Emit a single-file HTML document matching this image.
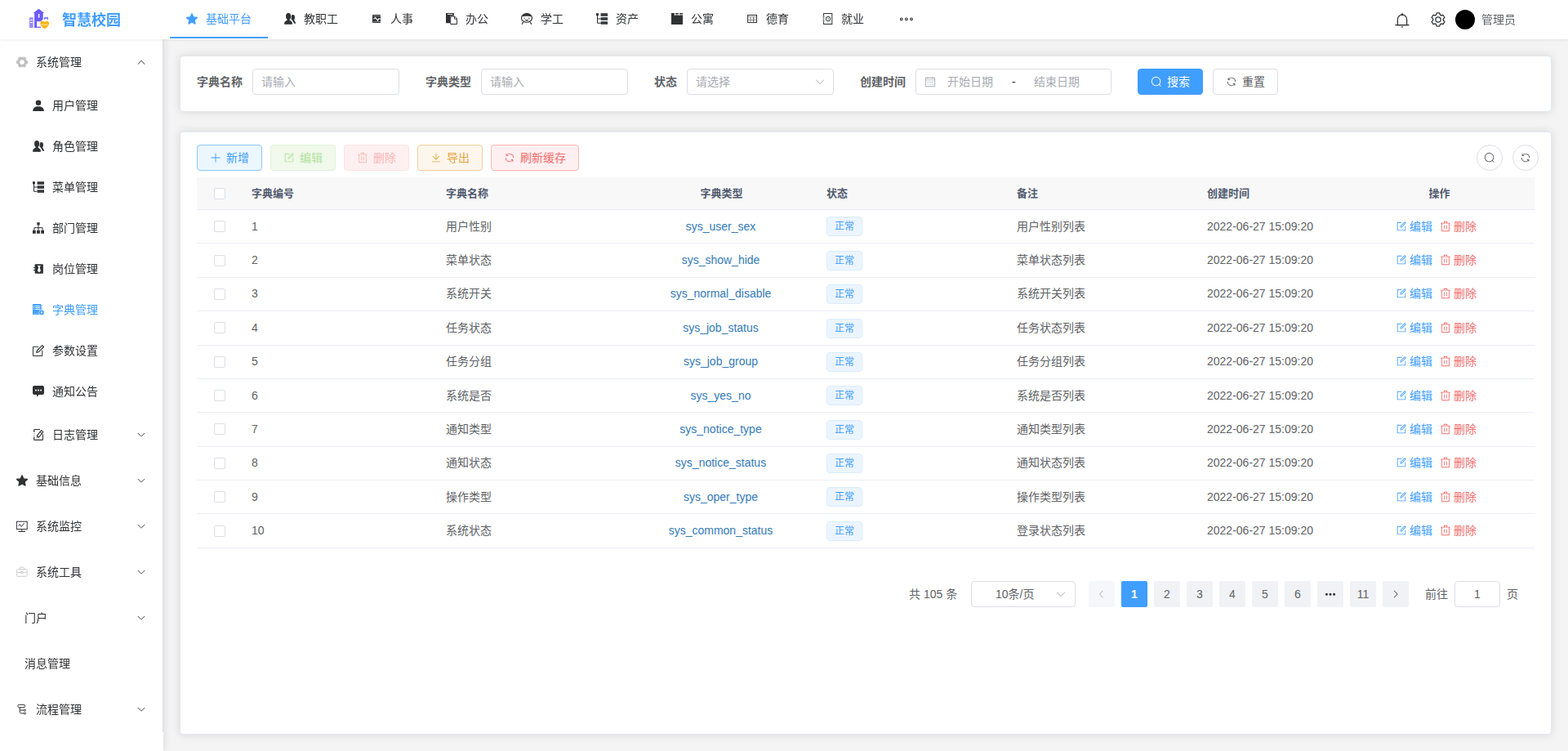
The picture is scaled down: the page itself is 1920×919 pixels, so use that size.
<!DOCTYPE html>
<html lang="zh-CN">
<head>
<meta charset="utf-8">
<title>智慧校园</title>
<style>
*{box-sizing:border-box;margin:0;padding:0}
html,body{width:1920px;height:919px;overflow:hidden}
body{font-family:"Liberation Sans","Noto Sans CJK SC",sans-serif;font-size:14px;color:#606266;background:#f4f4f5;position:relative}
svg{display:block}
i{font-style:normal}
#hdr{position:absolute;left:0;top:0;width:1920px;height:48px;background:#fff;box-shadow:0 1px 4px rgba(0,21,41,.08);z-index:5}
#logo{position:absolute;left:36px;top:11px;width:24px;height:24px;overflow:visible}
#logo-t{position:absolute;left:76px;top:1.5px;height:48px;line-height:47px;font-size:18px;font-weight:700;color:#409eff}
.tab{will-change:transform;position:absolute;top:0;height:47px;line-height:46px;font-size:14px;color:#303133;padding:0 20px 0 44px;white-space:nowrap}
.tab svg{position:absolute;left:20px;top:16px;width:14px;height:14px}
.tab.on{color:#409eff;border-bottom:2px solid #409eff}
#avatar{position:absolute;left:1782px;top:12px;width:24px;height:24px;border-radius:50%;background:#000}
#uname{position:absolute;left:1814px;top:0;height:48px;line-height:48px;font-size:14px;color:#606266}
#side{position:absolute;left:0;top:48px;width:200px;height:871px;background:#fff;box-shadow:2px 0 8px rgba(0,10,20,.09);z-index:4}
#side .bd{position:absolute;left:199px;top:0;width:1px;height:848px;background:#dcdfe6}
.mi{will-change:transform;position:absolute;left:0;width:199px;height:56px;line-height:56px;font-size:14px;color:#303133;white-space:nowrap}
.mi.sub{height:50px;line-height:50px}
.mi.on{color:#409eff}
.mi .ic{position:absolute;width:14px;height:14px}
.mi .ar{position:absolute;left:167px;top:50%;margin-top:-6px;width:12px;height:12px}
.mi span.t{position:absolute;top:0}
.card{position:absolute;background:#fff;border:1px solid #e4e7ed;border-radius:4px;box-shadow:0 0 12px rgba(0,0,0,.12)}
.lbl{position:absolute;top:84px;height:32px;line-height:32px;font-size:14px;font-weight:700;color:#606266;white-space:nowrap}
.inp{position:absolute;top:84px;height:32px;border:1px solid #dcdfe6;border-radius:4px;background:#fff;line-height:30px;padding-left:10px;color:#a8abb2;font-size:14px;white-space:nowrap}
.btn{position:absolute;height:32px;border-radius:4px;border:1px solid #dcdfe6;font-size:14px;line-height:30px;white-space:nowrap;background:#fff;color:#606266}
.btn svg{position:absolute;top:8px;width:14px;height:14px}
.btn span{position:absolute;top:0}
.cbtn{position:absolute;top:177px;width:32px;height:32px;border-radius:50%;border:1px solid #dcdfe6;background:#fff;color:#606266}
.cbtn svg{width:14px;height:14px;margin:8px}
#thead{position:absolute;left:241px;top:217px;width:1638px;height:40px;background:#f8f8f9;border-bottom:1px solid #ebeef5}
.th{position:absolute;top:217px;height:39px;line-height:39px;font-size:13px;font-weight:700;color:#515a6e;white-space:nowrap}
.row{position:absolute;left:241px;width:1638px;height:40px;font-size:14px;color:#606266}
.row div{position:absolute;top:0;height:40px;line-height:40px;white-space:nowrap}
.cb{position:absolute;width:14px;height:14px;border:1px solid #dcdfe6;border-radius:2px;background:#fff}
.row .c1{left:67px}.row .c2{left:305px}.row .c3{left:525px;width:233px;text-align:center;color:#337ab7}
.row .c5{left:1004px}.row .c6{left:1237px}
.tag{position:absolute;left:1012px;height:24px;width:44px;line-height:22px;border:1px solid #d9ecff;background:#ecf5ff;color:#409eff;font-size:12px;border-radius:4px;text-align:center}
.rb{position:absolute;left:241px;width:1638px;height:1px;background:#ebeef5}
.row .e{left:1485px;color:#409eff}.row .d{left:1539px;color:#f56c6c}
.row svg{position:absolute;width:14px;height:14px}
.pg{position:absolute;top:711px;width:32px;height:32px;line-height:32px;text-align:center;background:#f0f2f5;color:#606266;border-radius:2px;font-size:14px}
.pg.on{background:#409eff;color:#fff;font-weight:700}
.pt{position:absolute;top:711px;height:32px;line-height:32px;font-size:14px;color:#606266;white-space:nowrap}
</style>
</head>
<body>
<div id="hdr">
<svg id="logo" viewBox="0 0 24 24">
<rect x="0" y="10.300" width="4.700" height="12.700" fill="#9a8cff"/>
<rect x="1" y="13" width="2.900" height="1" fill="#fff"/><rect x="1" y="16" width="2.900" height="1" fill="#fff"/>
<path d="M11.500 -0.200 18.200 4.900H16.700V12.500L14 15.200H9V21.800H14V23H6.100V4.900H4.700z" fill="#6b5bff"/>
<rect x="10.850" y="5.900" width="1.500" height="4.800" rx=".5" fill="#fff"/>
<path d="M18.100 10.200H23V13.200H22.100V11.700H19V13H18.100z" fill="#6b5bff"/>
<path d="M18.700 24.300C16.500 22.600 13.300 20.400 13.300 17.700 13.300 16 14.600 14.800 16.100 14.800 17.200 14.800 18.200 15.400 18.700 16.300 19.200 15.400 20.200 14.800 21.300 14.800 22.800 14.800 24.100 16 24.100 17.700 24.100 20.400 20.900 22.600 18.700 24.300z" fill="#ffb20f"/>
<path d="M14 19.200h2.800l.8-1.200 1.100 2.300.9-1.400h3.800" fill="none" stroke="#fff" stroke-width=".6"/>
</svg>
<div id="logo-t">智慧校园</div>
<div class="tab on" style="left:208px"><svg viewBox="0 0 14 14" fill="currentColor"><polygon points="7.00,0.70 8.94,4.93 13.56,5.47 10.14,8.62 11.06,13.18 7.00,10.90 2.94,13.18 3.86,8.62 0.44,5.47 5.06,4.93" stroke="currentColor" stroke-width="1.2" stroke-linejoin="round"/></svg><span>基础平台</span></div>
<div class="tab" style="left:328px"><svg viewBox="0 0 14 14" fill="currentColor"><ellipse cx="10.700" cy="5.400" rx="2.250" ry="3.300"/><path d="M10.100 8 11.600 7.600 14 11.800V12.800H12.300L10 9z"/><g stroke="#fff" stroke-width=".9"><ellipse cx="5.100" cy="4.100" rx="3" ry="4.050"/><path d="M3.600 8.300C3.600 9.200 2.600 9.400 1.600 9.900.5 10.400.2 11.300.2 13.800H9.900C9.900 11.300 9.600 10.400 8.500 9.900 7.500 9.400 6.600 9.200 6.600 8.300z"/></g><ellipse cx="5.100" cy="4.100" rx="3" ry="4.050"/><path d="M3.600 7.500V8.300C3.600 9.200 2.600 9.400 1.600 9.900.5 10.400.2 11.300.2 13.800H9.900C9.900 11.300 9.600 10.400 8.500 9.900 7.500 9.400 6.600 9.200 6.600 8.300V7.500z"/></svg><span>教职工</span></div>
<div class="tab" style="left:434px"><svg viewBox="0 0 14 14" fill="currentColor"><rect x="2" y="2" width="10" height="10" rx=".7"/><rect x="2.900" y="3.100" width="9.100" height=".75" fill="#fff" opacity=".6"/><rect x="2.900" y="10.250" width="9.100" height=".75" fill="#fff" opacity=".6"/><rect x="2.900" y="6.600" width="9.100" height=".75" fill="#fff" opacity=".35"/><path d="M3.500 7.100 5.600 5.500 8.500 9.100 9.900 6.900H11.500" fill="none" stroke="#fff" stroke-width="1.100"/></svg><span>人事</span></div>
<div class="tab" style="left:526px"><svg viewBox="0 0 14 14" fill="currentColor"><path d="M0 0h9.800v3.600H5.200v8.600H0z"/><rect x="2" y="1.100" width="6.200" height=".9" fill="#fff"/><path d="M5.700 4.100h5.100l2.700 2.700v6.700H5.700z" fill="#fff" stroke="currentColor" stroke-width="1"/><path d="M10.500 4.300v2.800h2.800" fill="none" stroke="currentColor" stroke-width="1"/></svg><span>办公</span></div>
<div class="tab" style="left:618px"><svg viewBox="0 0 14 14" fill="currentColor"><ellipse cx="7" cy="5.900" rx="6.500" ry="5.400" fill="none" stroke="currentColor" stroke-width="1.100"/><path d="M.9 4.800C1.900 1.700 4.400.4 7 .4S12.100 1.700 13.100 4.800C10.600 3.500 3.400 3.500.9 4.800z"/><circle cx="4.200" cy="6.300" r=".7"/><circle cx="9.800" cy="6.300" r=".7"/><path d="M4.800 8.100C5.800 9.900 8.200 9.900 9.200 8.100 7.800 8.700 6.200 8.700 4.800 8.100z" stroke="currentColor" stroke-width=".5"/><path d="M2.600 11 1.300 13.800M11.400 11l1.300 2.800" fill="none" stroke="currentColor" stroke-width="1.200"/></svg><span>学工</span></div>
<div class="tab" style="left:710px"><svg viewBox="0 0 14 14" fill="currentColor"><rect x="5.600" y="0.200" width="8.400" height="3.600"/><rect x="5.600" y="5.200" width="8.400" height="3.600"/><rect x="5.600" y="10.300" width="8.400" height="3.500"/><rect x="0" y="0.200" width="3" height="3"/><path d="M1.500 3v9.300h4.100M1.500 7h4.100" fill="none" stroke="currentColor" stroke-width="1"/><rect x="6.800" y="1.700" width="6" height=".6" fill="#fff" opacity=".18"/><rect x="6.800" y="6.700" width="6" height=".6" fill="#fff" opacity=".18"/><rect x="6.800" y="11.800" width="6" height=".6" fill="#fff" opacity=".18"/></svg><span>资产</span></div>
<div class="tab" style="left:802px"><svg viewBox="0 0 14 14" fill="currentColor"><path d="M0 0h3.800v2.950H14V14H0z"/><rect x="5" y="0" width="3.900" height="1"/><rect x="10.100" y="0" width="3.900" height="1"/><rect x="5" y="1" width="3.900" height="1.950" opacity=".45"/><rect x="10.100" y="1" width="3.900" height="1.950" opacity=".45"/><rect x="3.800" y="2.450" width="10.200" height=".5" opacity=".45"/></svg><span>公寓</span></div>
<div class="tab" style="left:894px"><svg viewBox="0 0 14 14" fill="currentColor"><rect x="1.650" y="2.500" width="10.900" height="9.100" fill="none" stroke="currentColor" stroke-width="1"/><path d="M1.650 4.700h10.900" stroke="currentColor" stroke-width=".9" fill="none" opacity=".55"/><path d="M1.650 8.300h10.900M5.100 4.700v6.900" stroke="currentColor" stroke-width=".9" fill="none" opacity=".6"/><path d="M8.700 4.700v6.900" stroke="currentColor" stroke-width=".9" fill="none" opacity=".9"/></svg><span>德育</span></div>
<div class="tab" style="left:986px"><svg viewBox="0 0 14 14" fill="currentColor"><rect x="2.600" y=".5" width="10.200" height="13" fill="none" stroke="currentColor" stroke-width="1"/><path d="M1.200 4.500h2.600M1.200 7h2.600M1.200 9.500h2.600" stroke="#fff" stroke-width="1.600" fill="none"/><path d="M1.400 4.500h2.200M1.400 7h2.200M1.400 9.500h2.200" stroke="currentColor" stroke-width=".8" fill="none" opacity=".75"/><circle cx="8" cy="7.100" r="2.700" fill="none" stroke="currentColor" stroke-width="1"/><path d="M8 5.800v1.400h1" stroke="currentColor" stroke-width=".7" fill="none"/></svg><span>就业</span></div>
<div class="tab" style="left:1078px;width:60px"><svg style="left:24px;width:16px;height:14px;overflow:visible" viewBox="0 0 14 14" fill="currentColor"><circle cx=".8" cy="7.300" r="1.350" fill="none" stroke="currentColor" stroke-width="1.100"/><circle cx="6.900" cy="7.300" r="1.350" fill="none" stroke="currentColor" stroke-width="1.100"/><circle cx="13" cy="7.300" r="1.350" fill="none" stroke="currentColor" stroke-width="1.100"/></svg></div>
<svg style="position:absolute;left:1707px;top:15px;width:20px;height:20px;color:#303133" viewBox="0 0 1024 1024" fill="currentColor"><path d="M512 64a64 64 0 0 1 64 64v64H448v-64a64 64 0 0 1 64-64z"/><path d="M256 768h512V448a256 256 0 1 0-512 0v320zm256-640a320 320 0 0 1 320 320v384H192V448a320 320 0 0 1 320-320z"/><path d="M96 768h832q32 0 32 32t-32 32H96q-32 0-32-32t32-32zm352 128h128a64 64 0 0 1-128 0z"/></svg>
<svg style="position:absolute;left:1751px;top:14px;width:20px;height:20px;color:#303133" viewBox="0 0 1024 1024" fill="currentColor"><path d="M600.704 64a32 32 0 0 1 30.464 22.208l35.2 109.376c14.784 7.232 28.928 15.36 42.432 24.512l112.384-24.192a32 32 0 0 1 34.432 15.36L944.32 364.8a32 32 0 0 1-4.032 37.504l-77.12 85.12a357.12 357.12 0 0 1 0 49.024l77.12 85.248a32 32 0 0 1 4.032 37.504l-88.704 153.6a32 32 0 0 1-34.432 15.296L708.8 803.904c-13.44 9.088-27.648 17.28-42.368 24.512l-35.264 109.376A32 32 0 0 1 600.704 960H423.296a32 32 0 0 1-30.464-22.208L357.696 828.48a351.616 351.616 0 0 1-42.56-24.64l-112.32 24.256a32 32 0 0 1-34.432-15.36L79.68 659.2a32 32 0 0 1 4.032-37.504l77.12-85.248a357.12 357.12 0 0 1 0-48.896l-77.12-85.248A32 32 0 0 1 79.68 364.8l88.704-153.6a32 32 0 0 1 34.432-15.296l112.32 24.256c13.568-9.152 27.776-17.408 42.56-24.64l35.2-109.312A32 32 0 0 1 423.232 64H600.64zm-23.424 64H446.72l-36.352 113.088-24.512 11.968a294.113 294.113 0 0 0-34.816 20.096l-22.656 15.36-116.224-25.088-65.28 113.152 79.68 88.192-1.92 27.136a293.12 293.12 0 0 0 0 40.192l1.92 27.136-79.808 88.192 65.344 113.152 116.224-25.024 22.656 15.296a294.113 294.113 0 0 0 34.816 20.096l24.512 11.968L446.72 896h130.688l36.48-113.152 24.448-11.904a288.282 288.282 0 0 0 34.752-20.096l22.592-15.296 116.288 25.024 65.28-113.152-79.744-88.192 1.92-27.136a293.12 293.12 0 0 0 0-40.256l-1.92-27.136 79.808-88.128-65.344-113.152-116.288 24.96-22.592-15.232a287.616 287.616 0 0 0-34.752-20.096l-24.448-11.904L577.344 128zM512 320a192 192 0 1 1 0 384 192 192 0 0 1 0-384zm0 64a128 128 0 1 0 0 256 128 128 0 0 0 0-256z"/></svg>
<div id="avatar"></div><div id="uname">管理员</div>
</div>
<div id="side"><div class="bd"></div>
<div class="mi" style="top:0px"><svg class="ic" style="left:20px;top:21px;color:#bfbfbf;" viewBox="0 0 14 14" fill="currentColor"><path d="M12.09 5.20 L13.44 5.56 L13.44 8.44 L12.09 8.80 L11.11 10.51 L11.47 11.86 L8.97 13.30 L7.99 12.31 L6.01 12.31 L5.03 13.30 L2.53 11.86 L2.89 10.51 L1.91 8.80 L0.56 8.44 L0.56 5.56 L1.91 5.20 L2.89 3.49 L2.53 2.14 L5.03 0.70 L6.01 1.69 L7.99 1.69 L8.97 0.70 L11.47 2.14 L11.11 3.49Z" stroke="currentColor" stroke-width="1" stroke-linejoin="round"/><circle cx="7" cy="7" r="5.400"/><circle cx="7" cy="7" r="2.850" fill="#fff"/></svg><span class="t" style="left:44px">系统管理</span><svg class="ar" viewBox="0 0 1024 1024" fill="currentColor"><path d="m488.832 344.320-339.840 356.672a32 32 0 0 0 0 44.160l.384.384a29.440 29.440 0 0 0 42.688 0l320-335.872 319.872 335.872a29.440 29.440 0 0 0 42.688 0l.384-.384a32 32 0 0 0 0-44.160L535.168 344.320a32 32 0 0 0-46.336 0z"/></svg></div>
<div class="mi sub" style="top:56px"><svg class="ic" style="left:40px;top:18px;" viewBox="0 0 14 14" fill="currentColor"><circle cx="7" cy="3.700" r="3.300"/><path d="M0.200 14c0-3.800 2.600-5.800 6.800-5.800s6.800 2 6.800 5.800z"/></svg><span class="t" style="left:64px">用户管理</span></div>
<div class="mi sub" style="top:106px"><svg class="ic" style="left:40px;top:18px;" viewBox="0 0 14 14" fill="currentColor"><ellipse cx="10.700" cy="5.400" rx="2.250" ry="3.300"/><path d="M10.100 8 11.600 7.600 14 11.800V12.800H12.300L10 9z"/><g stroke="#fff" stroke-width=".9"><ellipse cx="5.100" cy="4.100" rx="3" ry="4.050"/><path d="M3.600 8.300C3.600 9.200 2.600 9.400 1.600 9.900.5 10.400.2 11.300.2 13.800H9.900C9.900 11.300 9.600 10.400 8.500 9.900 7.500 9.400 6.600 9.200 6.600 8.300z"/></g><ellipse cx="5.100" cy="4.100" rx="3" ry="4.050"/><path d="M3.600 7.500V8.300C3.600 9.200 2.600 9.400 1.600 9.900.5 10.400.2 11.300.2 13.800H9.900C9.900 11.300 9.600 10.400 8.500 9.900 7.500 9.400 6.600 9.200 6.600 8.300V7.500z"/></svg><span class="t" style="left:64px">角色管理</span></div>
<div class="mi sub" style="top:156px"><svg class="ic" style="left:40px;top:18px;" viewBox="0 0 14 14" fill="currentColor"><rect x="5.600" y="0.200" width="8.400" height="3.600"/><rect x="5.600" y="5.200" width="8.400" height="3.600"/><rect x="5.600" y="10.300" width="8.400" height="3.500"/><rect x="0" y="0.200" width="3" height="3"/><path d="M1.500 3v9.300h4.100M1.500 7h4.100" fill="none" stroke="currentColor" stroke-width="1"/><rect x="6.800" y="1.700" width="6" height=".6" fill="#fff" opacity=".18"/><rect x="6.800" y="6.700" width="6" height=".6" fill="#fff" opacity=".18"/><rect x="6.800" y="11.800" width="6" height=".6" fill="#fff" opacity=".18"/></svg><span class="t" style="left:64px">菜单管理</span></div>
<div class="mi sub" style="top:206px"><svg class="ic" style="left:40px;top:18px;" viewBox="0 0 14 14" fill="currentColor"><rect x="5.300" y=".2" width="3.400" height="3.300"/><rect x="0" y="9.700" width="3.800" height="4.100"/><rect x="5.100" y="9.700" width="3.800" height="4.100"/><rect x="10.200" y="9.700" width="3.800" height="4.100"/><path d="M7 3.500v6.200M1.900 9.700V6.700h10.200v3" fill="none" stroke="currentColor" stroke-width="1"/></svg><span class="t" style="left:64px">部门管理</span></div>
<div class="mi sub" style="top:256px"><svg class="ic" style="left:40px;top:18px;" viewBox="0 0 14 14" fill="currentColor"><rect x="2.600" y="1.150" width="10.300" height="11.600" rx="1.100"/><rect x="1" y="5" width="2.400" height=".95"/><rect x="1" y="8" width="2.400" height=".95"/><path d="M5.900 3.100H9.900L8.700 5 9.900 9.600 7.900 11.300 5.900 9.600 7.100 5z" fill="#fff"/></svg><span class="t" style="left:64px">岗位管理</span></div>
<div class="mi sub on" style="top:306px"><svg class="ic" style="left:40px;top:18px;" viewBox="0 0 14 14" fill="currentColor"><path d="M1 0h8.400c.6 0 1 .4 1 1v12H1c-.6 0-1-.4-1-1V1c0-.6.400-1 1-1z"/><rect x="10.400" y="1" width="1.400" height="6.500" opacity=".45"/><g fill="#fff"><rect x=".9" y="2" width="1.100" height=".95"/><rect x=".9" y="4.050" width="1.100" height=".95"/><rect x=".9" y="6.100" width="1.100" height=".95"/><rect x="3.050" y="2" width="6" height=".95"/><rect x="3.050" y="4.050" width="6" height=".95"/><rect x="3.050" y="6.100" width="6" height=".95"/><rect x="1" y="11.100" width="7" height=".5" opacity=".5"/><circle cx="10.950" cy="10.400" r="3.400"/></g><circle cx="10.950" cy="10.400" r="2.850"/><circle cx="10.950" cy="10.400" r="1.150" fill="#fff"/></svg><span class="t" style="left:64px">字典管理</span></div>
<div class="mi sub" style="top:356px"><svg class="ic" style="left:40px;top:18px;" viewBox="0 0 14 14" fill="currentColor"><path d="M7.300 2.300H.5v11.200h11.200V6.900" fill="none" stroke="currentColor" stroke-width="1"/><path d="M11.700.7l1.800 1.800-6.300 6.300-2.400.6.600-2.400z" fill="#fff" stroke="currentColor" stroke-width="1.150" stroke-linejoin="round"/></svg><span class="t" style="left:64px">参数设置</span></div>
<div class="mi sub" style="top:406px"><svg class="ic" style="left:40px;top:18px;" viewBox="0 0 14 14" fill="currentColor"><path d="M2 0h10a2 2 0 0 1 2 2v7a2 2 0 0 1-2 2H7.600L5 13.800V11H2a2 2 0 0 1-2-2V2a2 2 0 0 1 2-2z"/><rect x="3" y="4.700" width="1.800" height="1.700" fill="#fff"/><rect x="6.100" y="4.700" width="1.800" height="1.700" fill="#fff"/><rect x="9.200" y="4.700" width="1.800" height="1.700" fill="#fff"/></svg><span class="t" style="left:64px">通知公告</span></div>
<div class="mi" style="top:456px"><svg class="ic" style="left:40px;top:21px;" viewBox="0 0 14 14" fill="currentColor"><path d="M9 .5H2.600c-.6 0-1 .4-1 1v1.600M1.600 10.300v2.100c0 .6.400 1 1 1h8.900c.6 0 1-.4 1-1V6.200" fill="none" stroke="currentColor" stroke-width="1.100"/><path d="M1.100 3.100h1.500M1.100 10.300h1.500" stroke="currentColor" stroke-width="1.100" fill="none"/><path d="M1.200 5.500h1.600M1.200 8h1.600" stroke="currentColor" stroke-width=".9" fill="none" opacity=".35"/><rect x="1.300" y="5.500" width="1.400" height="2.500" opacity=".12"/><path d="M5.200 8.300l2.300 1.900-3.300 1.400z" opacity=".5"/><path d="M10.600 1.700l2.300 1.900-5.400 6.600-2.300-1.900z" fill="#fff" stroke="currentColor" stroke-width="1.100" stroke-linejoin="round"/><path d="M9.100 3.500l2.300 1.900" stroke="currentColor" stroke-width="1" fill="none"/></svg><span class="t" style="left:64px">日志管理</span><svg class="ar" viewBox="0 0 1024 1024" fill="currentColor"><path d="M831.872 340.864 512 652.672 192.128 340.864a30.592 30.592 0 0 0-42.752 0 29.120 29.120 0 0 0 0 41.600L489.664 714.240a32 32 0 0 0 44.672 0l340.288-331.712a29.120 29.120 0 0 0 0-41.728 30.592 30.592 0 0 0-42.752 0z"/></svg></div>
<div class="mi" style="top:512px"><svg class="ic" style="left:20px;top:21px;" viewBox="0 0 14 14" fill="currentColor"><polygon points="7.00,0.70 8.94,4.93 13.56,5.47 10.14,8.62 11.06,13.18 7.00,10.90 2.94,13.18 3.86,8.62 0.44,5.47 5.06,4.93" stroke="currentColor" stroke-width="1.2" stroke-linejoin="round"/></svg><span class="t" style="left:44px">基础信息</span><svg class="ar" viewBox="0 0 1024 1024" fill="currentColor"><path d="M831.872 340.864 512 652.672 192.128 340.864a30.592 30.592 0 0 0-42.752 0 29.120 29.120 0 0 0 0 41.600L489.664 714.240a32 32 0 0 0 44.672 0l340.288-331.712a29.120 29.120 0 0 0 0-41.728 30.592 30.592 0 0 0-42.752 0z"/></svg></div>
<div class="mi" style="top:568px"><svg class="ic" style="left:20px;top:21px;" viewBox="0 0 14 14" fill="currentColor"><rect x=".4" y="1.200" width="12.800" height="9.400" fill="none" stroke="currentColor" stroke-width="1"/><path d="M6.800 10.600v3M2.600 13.500h8.400" stroke="currentColor" stroke-width="1" fill="none"/><path d="M2.600 6.500l1.700-2.100 1.800 3.100 3.500-4.300" fill="none" stroke="currentColor" stroke-width=".9"/></svg><span class="t" style="left:44px">系统监控</span><svg class="ar" viewBox="0 0 1024 1024" fill="currentColor"><path d="M831.872 340.864 512 652.672 192.128 340.864a30.592 30.592 0 0 0-42.752 0 29.120 29.120 0 0 0 0 41.600L489.664 714.240a32 32 0 0 0 44.672 0l340.288-331.712a29.120 29.120 0 0 0 0-41.728 30.592 30.592 0 0 0-42.752 0z"/></svg></div>
<div class="mi" style="top:624px"><svg class="ic" style="left:20px;top:21px;color:#c8c8c8;" viewBox="0 0 14 14" fill="currentColor"><rect x=".6" y="3.700" width="12.600" height="8.600" rx=".8" fill="none" stroke="currentColor" stroke-width=".9"/><path d="M4.400 3.700V1.900c0-.4.300-.7.700-.7h3.600c.4 0 .7.300.7.700v1.800" fill="none" stroke="currentColor" stroke-width=".9"/><path d="M.6 7.600h5.300M7.900 7.600h5.300" stroke="currentColor" stroke-width=".8" fill="none"/><rect x="5.900" y="6.600" width="2" height="2" fill="none" stroke="currentColor" stroke-width=".8"/></svg><span class="t" style="left:44px">系统工具</span><svg class="ar" viewBox="0 0 1024 1024" fill="currentColor"><path d="M831.872 340.864 512 652.672 192.128 340.864a30.592 30.592 0 0 0-42.752 0 29.120 29.120 0 0 0 0 41.600L489.664 714.240a32 32 0 0 0 44.672 0l340.288-331.712a29.120 29.120 0 0 0 0-41.728 30.592 30.592 0 0 0-42.752 0z"/></svg></div>
<div class="mi" style="top:680px"><span class="t" style="left:30px">门户</span><svg class="ar" viewBox="0 0 1024 1024" fill="currentColor"><path d="M831.872 340.864 512 652.672 192.128 340.864a30.592 30.592 0 0 0-42.752 0 29.120 29.120 0 0 0 0 41.600L489.664 714.240a32 32 0 0 0 44.672 0l340.288-331.712a29.120 29.120 0 0 0 0-41.728 30.592 30.592 0 0 0-42.752 0z"/></svg></div>
<div class="mi" style="top:736px"><span class="t" style="left:30px">消息管理</span></div>
<div class="mi" style="top:792px"><svg class="ic" style="left:20px;top:21px;" viewBox="0 0 14 14" fill="currentColor"><rect x="1.900" y="1.300" width="8.600" height="3.400" rx="1.500" fill="none" stroke="currentColor" stroke-width="1"/><path d="M4.300 4.700v5.600c0 .9.700 1.600 1.600 1.600h3.300M4.300 6.600c0 .9.700 1.500 1.600 1.500h3.300" fill="none" stroke="currentColor" stroke-width="1"/><circle cx="10.400" cy="8.100" r="1.100" fill="#fff" stroke="currentColor" stroke-width=".9"/><circle cx="10.400" cy="11.900" r="1.100" fill="#fff" stroke="currentColor" stroke-width=".9"/></svg><span class="t" style="left:44px">流程管理</span><svg class="ar" viewBox="0 0 1024 1024" fill="currentColor"><path d="M831.872 340.864 512 652.672 192.128 340.864a30.592 30.592 0 0 0-42.752 0 29.120 29.120 0 0 0 0 41.600L489.664 714.240a32 32 0 0 0 44.672 0l340.288-331.712a29.120 29.120 0 0 0 0-41.728 30.592 30.592 0 0 0-42.752 0z"/></svg></div>
</div>
<div class="card" style="left:220px;top:68px;width:1680px;height:69px"></div>
<div class="lbl" style="left:241px">字典名称</div><div class="inp" style="left:309px;width:180px">请输入</div>
<div class="lbl" style="left:521px">字典类型</div><div class="inp" style="left:589px;width:180px">请输入</div>
<div class="lbl" style="left:801px">状态</div><div class="inp" style="left:841px;width:180px">请选择<svg style="position:absolute;left:155px;top:8px;width:14px;height:14px;color:#a8abb2" viewBox="0 0 1024 1024" fill="currentColor"><path d="M831.872 340.864 512 652.672 192.128 340.864a30.592 30.592 0 0 0-42.752 0 29.120 29.120 0 0 0 0 41.600L489.664 714.240a32 32 0 0 0 44.672 0l340.288-331.712a29.120 29.120 0 0 0 0-41.728 30.592 30.592 0 0 0-42.752 0z"/></svg></div>
<div class="lbl" style="left:1053px">创建时间</div><div class="inp" style="left:1121px;width:240px"><svg style="position:absolute;left:10px;top:8px;width:14px;height:14px;color:#a8abb2" viewBox="0 0 1024 1024" fill="currentColor"><path d="M128 384v512h768V192H768v32a32 32 0 1 1-64 0v-32H320v32a32 32 0 0 1-64 0v-32H128v128h768v64H128zm192-256h384V96a32 32 0 1 1 64 0v32h160a32 32 0 0 1 32 32v768a32 32 0 0 1-32 32H96a32 32 0 0 1-32-32V160a32 32 0 0 1 32-32h160V96a32 32 0 0 1 64 0v32zm-32 384h64a32 32 0 0 1 0 64h-64a32 32 0 0 1 0-64zm0 192h64a32 32 0 1 1 0 64h-64a32 32 0 1 1 0-64zm192-192h64a32 32 0 0 1 0 64h-64a32 32 0 0 1 0-64zm0 192h64a32 32 0 1 1 0 64h-64a32 32 0 1 1 0-64zm192-192h64a32 32 0 1 1 0 64h-64a32 32 0 1 1 0-64zm0 192h64a32 32 0 1 1 0 64h-64a32 32 0 1 1 0-64z"/></svg><span style="position:absolute;left:38px">开始日期</span><span style="position:absolute;left:117px;color:#303133">-</span><span style="position:absolute;left:144px">结束日期</span></div>
<div class="btn" style="left:1393px;top:84px;width:80px;background:#409eff;border-color:#409eff;color:#fff"><svg style="left:15px" viewBox="0 0 1024 1024" fill="currentColor"><path d="m795.904 750.72 124.992 124.928a32 32 0 0 1-45.248 45.248L750.656 795.904a416 416 0 1 1 45.248-45.248zM480 832a352 352 0 1 0 0-704 352 352 0 0 0 0 704z"/></svg><span style="left:35px">搜索</span></div>
<div class="btn" style="left:1485px;top:84px;width:80px"><svg style="left:15px" viewBox="0 0 1024 1024" fill="currentColor"><path d="M771.776 794.88A384 384 0 0 1 128 512h64a320 320 0 0 0 555.712 216.448H654.72a32 32 0 1 1 0-64h149.056a32 32 0 0 1 32 32v148.928a32 32 0 1 1-64 0v-50.56zM276.288 295.616h92.992a32 32 0 0 1 0 64H220.16a32 32 0 0 1-32-32V178.56a32 32 0 0 1 64 0v50.56A384 384 0 0 1 896.128 512h-64a320 320 0 0 0-555.776-216.384z"/></svg><span style="left:35px">重置</span></div>
<div class="card" style="left:220px;top:161px;width:1680px;height:738px"></div>
<div class="btn" style="left:241px;top:177px;width:80px;color:#409eff;background:#ebf6ff;border-color:#8cc5ff"><svg style="left:15px" viewBox="0 0 1024 1024" fill="currentColor"><path d="M480 480V128a32 32 0 0 1 64 0v352h352a32 32 0 1 1 0 64H544v352a32 32 0 1 1-64 0V544H128a32 32 0 0 1 0-64h352z"/></svg><span style="left:35px">新增</span></div>
<div class="btn" style="left:331px;top:177px;width:80px;color:#b3e19d;background:#f0f9eb;border-color:#e1f3d8"><svg style="left:15px" viewBox="0 0 1024 1024" fill="currentColor"><path d="M832 512a32 32 0 1 1 64 0v352a32 32 0 0 1-32 32H160a32 32 0 0 1-32-32V160a32 32 0 0 1 32-32h352a32 32 0 0 1 0 64H192v640h640V512z"/><path d="m469.952 554.240 52.800-7.552L847.104 222.400a32 32 0 1 0-45.248-45.248L477.440 501.440l-7.552 52.800zm422.400-422.400a96 96 0 0 1 0 135.808l-331.840 331.840a32 32 0 0 1-18.112 9.088L436.800 623.680a32 32 0 0 1-36.224-36.224l15.104-105.600a32 32 0 0 1 9.024-18.112l331.904-331.840a96 96 0 0 1 135.744 0z"/></svg><span style="left:35px">编辑</span></div>
<div class="btn" style="left:421px;top:177px;width:80px;color:#fab6b6;background:#fef0f0;border-color:#fde2e2"><svg style="left:15px" viewBox="0 0 1024 1024" fill="currentColor"><path d="M160 256H96a32 32 0 0 1 0-64h256V95.936a32 32 0 0 1 32-32h256a32 32 0 0 1 32 32V192h256a32 32 0 1 1 0 64h-64v672a32 32 0 0 1-32 32H192a32 32 0 0 1-32-32V256zm448-64v-64H416v64h192zM224 896h576V256H224v640zm192-128a32 32 0 0 1-32-32V416a32 32 0 0 1 64 0v320a32 32 0 0 1-32 32zm192 0a32 32 0 0 1-32-32V416a32 32 0 0 1 64 0v320a32 32 0 0 1-32 32z"/></svg><span style="left:35px">删除</span></div>
<div class="btn" style="left:511px;top:177px;width:80px;color:#e6a23c;background:#fdf6ec;border-color:#f3d19e"><svg style="left:15px" viewBox="0 0 1024 1024" fill="currentColor"><path d="M160 832h704a32 32 0 1 1 0 64H160a32 32 0 1 1 0-64zm384-253.696 236.288-236.352 45.248 45.248L508.800 704 192 387.200l45.248-45.248L480 584.704V128h64v450.304z"/></svg><span style="left:35px">导出</span></div>
<div class="btn" style="left:601px;top:177px;width:108px;color:#f56c6c;background:#fef0f0;border-color:#fab6b6"><svg style="left:15px" viewBox="0 0 1024 1024" fill="currentColor"><path d="M771.776 794.88A384 384 0 0 1 128 512h64a320 320 0 0 0 555.712 216.448H654.72a32 32 0 1 1 0-64h149.056a32 32 0 0 1 32 32v148.928a32 32 0 1 1-64 0v-50.56zM276.288 295.616h92.992a32 32 0 0 1 0 64H220.16a32 32 0 0 1-32-32V178.56a32 32 0 0 1 64 0v50.56A384 384 0 0 1 896.128 512h-64a320 320 0 0 0-555.776-216.384z"/></svg><span style="left:35px">刷新缓存</span></div>
<div class="cbtn" style="left:1808px"><svg viewBox="0 0 1024 1024" fill="currentColor"><path d="m795.904 750.72 124.992 124.928a32 32 0 0 1-45.248 45.248L750.656 795.904a416 416 0 1 1 45.248-45.248zM480 832a352 352 0 1 0 0-704 352 352 0 0 0 0 704z"/></svg></div>
<div class="cbtn" style="left:1852px"><svg viewBox="0 0 1024 1024" fill="currentColor"><path d="M771.776 794.88A384 384 0 0 1 128 512h64a320 320 0 0 0 555.712 216.448H654.72a32 32 0 1 1 0-64h149.056a32 32 0 0 1 32 32v148.928a32 32 0 1 1-64 0v-50.56zM276.288 295.616h92.992a32 32 0 0 1 0 64H220.16a32 32 0 0 1-32-32V178.56a32 32 0 0 1 64 0v50.56A384 384 0 0 1 896.128 512h-64a320 320 0 0 0-555.776-216.384z"/></svg></div>
<div id="thead"></div>
<div class="cb" style="left:262px;top:230px"></div>
<div class="th" style="left:308px">字典编号</div>
<div class="th" style="left:546px">字典名称</div>
<div class="th" style="left:767px;width:233px;text-align:center">字典类型</div>
<div class="th" style="left:1012px">状态</div>
<div class="th" style="left:1245px">备注</div>
<div class="th" style="left:1478px">创建时间</div>
<div class="th" style="left:1646px;width:233px;text-align:center">操作</div>
<div class="rb" style="top:297px"></div>
<div class="row" style="top:257px"><div class="c1">1</div><div class="c2">用户性别</div><div class="c3">sys_user_sex</div><div class="c5">用户性别列表</div><div class="c6">2022-06-27 15:09:20</div><svg style="left:1468px;top:13px;color:#409eff" viewBox="0 0 1024 1024" fill="currentColor"><path d="M832 512a32 32 0 1 1 64 0v352a32 32 0 0 1-32 32H160a32 32 0 0 1-32-32V160a32 32 0 0 1 32-32h352a32 32 0 0 1 0 64H192v640h640V512z"/><path d="m469.952 554.240 52.800-7.552L847.104 222.400a32 32 0 1 0-45.248-45.248L477.440 501.440l-7.552 52.800zm422.400-422.400a96 96 0 0 1 0 135.808l-331.840 331.840a32 32 0 0 1-18.112 9.088L436.800 623.680a32 32 0 0 1-36.224-36.224l15.104-105.600a32 32 0 0 1 9.024-18.112l331.904-331.840a96 96 0 0 1 135.744 0z"/></svg><div class="e">编辑</div><svg style="left:1522px;top:13px;color:#f56c6c" viewBox="0 0 1024 1024" fill="currentColor"><path d="M160 256H96a32 32 0 0 1 0-64h256V95.936a32 32 0 0 1 32-32h256a32 32 0 0 1 32 32V192h256a32 32 0 1 1 0 64h-64v672a32 32 0 0 1-32 32H192a32 32 0 0 1-32-32V256zm448-64v-64H416v64h192zM224 896h576V256H224v640zm192-128a32 32 0 0 1-32-32V416a32 32 0 0 1 64 0v320a32 32 0 0 1-32 32zm192 0a32 32 0 0 1-32-32V416a32 32 0 0 1 64 0v320a32 32 0 0 1-32 32z"/></svg><div class="d">删除</div></div>
<i class="cb" style="left:262px;top:270px"></i><div class="tag" style="top:265px">正常</div>
<div class="rb" style="top:339px"></div>
<div class="row" style="top:298px"><div class="c1">2</div><div class="c2">菜单状态</div><div class="c3">sys_show_hide</div><div class="c5">菜单状态列表</div><div class="c6">2022-06-27 15:09:20</div><svg style="left:1468px;top:13px;color:#409eff" viewBox="0 0 1024 1024" fill="currentColor"><path d="M832 512a32 32 0 1 1 64 0v352a32 32 0 0 1-32 32H160a32 32 0 0 1-32-32V160a32 32 0 0 1 32-32h352a32 32 0 0 1 0 64H192v640h640V512z"/><path d="m469.952 554.240 52.800-7.552L847.104 222.400a32 32 0 1 0-45.248-45.248L477.440 501.440l-7.552 52.800zm422.400-422.400a96 96 0 0 1 0 135.808l-331.840 331.840a32 32 0 0 1-18.112 9.088L436.800 623.680a32 32 0 0 1-36.224-36.224l15.104-105.600a32 32 0 0 1 9.024-18.112l331.904-331.840a96 96 0 0 1 135.744 0z"/></svg><div class="e">编辑</div><svg style="left:1522px;top:13px;color:#f56c6c" viewBox="0 0 1024 1024" fill="currentColor"><path d="M160 256H96a32 32 0 0 1 0-64h256V95.936a32 32 0 0 1 32-32h256a32 32 0 0 1 32 32V192h256a32 32 0 1 1 0 64h-64v672a32 32 0 0 1-32 32H192a32 32 0 0 1-32-32V256zm448-64v-64H416v64h192zM224 896h576V256H224v640zm192-128a32 32 0 0 1-32-32V416a32 32 0 0 1 64 0v320a32 32 0 0 1-32 32zm192 0a32 32 0 0 1-32-32V416a32 32 0 0 1 64 0v320a32 32 0 0 1-32 32z"/></svg><div class="d">删除</div></div>
<i class="cb" style="left:262px;top:312px"></i><div class="tag" style="top:307px">正常</div>
<div class="rb" style="top:380px"></div>
<div class="row" style="top:339px"><div class="c1">3</div><div class="c2">系统开关</div><div class="c3">sys_normal_disable</div><div class="c5">系统开关列表</div><div class="c6">2022-06-27 15:09:20</div><svg style="left:1468px;top:13px;color:#409eff" viewBox="0 0 1024 1024" fill="currentColor"><path d="M832 512a32 32 0 1 1 64 0v352a32 32 0 0 1-32 32H160a32 32 0 0 1-32-32V160a32 32 0 0 1 32-32h352a32 32 0 0 1 0 64H192v640h640V512z"/><path d="m469.952 554.240 52.800-7.552L847.104 222.400a32 32 0 1 0-45.248-45.248L477.440 501.440l-7.552 52.800zm422.400-422.400a96 96 0 0 1 0 135.808l-331.840 331.840a32 32 0 0 1-18.112 9.088L436.800 623.680a32 32 0 0 1-36.224-36.224l15.104-105.600a32 32 0 0 1 9.024-18.112l331.904-331.840a96 96 0 0 1 135.744 0z"/></svg><div class="e">编辑</div><svg style="left:1522px;top:13px;color:#f56c6c" viewBox="0 0 1024 1024" fill="currentColor"><path d="M160 256H96a32 32 0 0 1 0-64h256V95.936a32 32 0 0 1 32-32h256a32 32 0 0 1 32 32V192h256a32 32 0 1 1 0 64h-64v672a32 32 0 0 1-32 32H192a32 32 0 0 1-32-32V256zm448-64v-64H416v64h192zM224 896h576V256H224v640zm192-128a32 32 0 0 1-32-32V416a32 32 0 0 1 64 0v320a32 32 0 0 1-32 32zm192 0a32 32 0 0 1-32-32V416a32 32 0 0 1 64 0v320a32 32 0 0 1-32 32z"/></svg><div class="d">删除</div></div>
<i class="cb" style="left:262px;top:353px"></i><div class="tag" style="top:348px">正常</div>
<div class="rb" style="top:422px"></div>
<div class="row" style="top:381px"><div class="c1">4</div><div class="c2">任务状态</div><div class="c3">sys_job_status</div><div class="c5">任务状态列表</div><div class="c6">2022-06-27 15:09:20</div><svg style="left:1468px;top:13px;color:#409eff" viewBox="0 0 1024 1024" fill="currentColor"><path d="M832 512a32 32 0 1 1 64 0v352a32 32 0 0 1-32 32H160a32 32 0 0 1-32-32V160a32 32 0 0 1 32-32h352a32 32 0 0 1 0 64H192v640h640V512z"/><path d="m469.952 554.240 52.800-7.552L847.104 222.400a32 32 0 1 0-45.248-45.248L477.440 501.440l-7.552 52.800zm422.400-422.400a96 96 0 0 1 0 135.808l-331.840 331.840a32 32 0 0 1-18.112 9.088L436.800 623.680a32 32 0 0 1-36.224-36.224l15.104-105.600a32 32 0 0 1 9.024-18.112l331.904-331.840a96 96 0 0 1 135.744 0z"/></svg><div class="e">编辑</div><svg style="left:1522px;top:13px;color:#f56c6c" viewBox="0 0 1024 1024" fill="currentColor"><path d="M160 256H96a32 32 0 0 1 0-64h256V95.936a32 32 0 0 1 32-32h256a32 32 0 0 1 32 32V192h256a32 32 0 1 1 0 64h-64v672a32 32 0 0 1-32 32H192a32 32 0 0 1-32-32V256zm448-64v-64H416v64h192zM224 896h576V256H224v640zm192-128a32 32 0 0 1-32-32V416a32 32 0 0 1 64 0v320a32 32 0 0 1-32 32zm192 0a32 32 0 0 1-32-32V416a32 32 0 0 1 64 0v320a32 32 0 0 1-32 32z"/></svg><div class="d">删除</div></div>
<i class="cb" style="left:262px;top:394px"></i><div class="tag" style="top:390px">正常</div>
<div class="rb" style="top:463px"></div>
<div class="row" style="top:422px"><div class="c1">5</div><div class="c2">任务分组</div><div class="c3">sys_job_group</div><div class="c5">任务分组列表</div><div class="c6">2022-06-27 15:09:20</div><svg style="left:1468px;top:13px;color:#409eff" viewBox="0 0 1024 1024" fill="currentColor"><path d="M832 512a32 32 0 1 1 64 0v352a32 32 0 0 1-32 32H160a32 32 0 0 1-32-32V160a32 32 0 0 1 32-32h352a32 32 0 0 1 0 64H192v640h640V512z"/><path d="m469.952 554.240 52.800-7.552L847.104 222.400a32 32 0 1 0-45.248-45.248L477.440 501.440l-7.552 52.800zm422.400-422.400a96 96 0 0 1 0 135.808l-331.840 331.840a32 32 0 0 1-18.112 9.088L436.800 623.680a32 32 0 0 1-36.224-36.224l15.104-105.600a32 32 0 0 1 9.024-18.112l331.904-331.840a96 96 0 0 1 135.744 0z"/></svg><div class="e">编辑</div><svg style="left:1522px;top:13px;color:#f56c6c" viewBox="0 0 1024 1024" fill="currentColor"><path d="M160 256H96a32 32 0 0 1 0-64h256V95.936a32 32 0 0 1 32-32h256a32 32 0 0 1 32 32V192h256a32 32 0 1 1 0 64h-64v672a32 32 0 0 1-32 32H192a32 32 0 0 1-32-32V256zm448-64v-64H416v64h192zM224 896h576V256H224v640zm192-128a32 32 0 0 1-32-32V416a32 32 0 0 1 64 0v320a32 32 0 0 1-32 32zm192 0a32 32 0 0 1-32-32V416a32 32 0 0 1 64 0v320a32 32 0 0 1-32 32z"/></svg><div class="d">删除</div></div>
<i class="cb" style="left:262px;top:436px"></i><div class="tag" style="top:431px">正常</div>
<div class="rb" style="top:504px"></div>
<div class="row" style="top:464px"><div class="c1">6</div><div class="c2">系统是否</div><div class="c3">sys_yes_no</div><div class="c5">系统是否列表</div><div class="c6">2022-06-27 15:09:20</div><svg style="left:1468px;top:13px;color:#409eff" viewBox="0 0 1024 1024" fill="currentColor"><path d="M832 512a32 32 0 1 1 64 0v352a32 32 0 0 1-32 32H160a32 32 0 0 1-32-32V160a32 32 0 0 1 32-32h352a32 32 0 0 1 0 64H192v640h640V512z"/><path d="m469.952 554.240 52.800-7.552L847.104 222.400a32 32 0 1 0-45.248-45.248L477.440 501.440l-7.552 52.800zm422.400-422.400a96 96 0 0 1 0 135.808l-331.840 331.840a32 32 0 0 1-18.112 9.088L436.800 623.680a32 32 0 0 1-36.224-36.224l15.104-105.600a32 32 0 0 1 9.024-18.112l331.904-331.840a96 96 0 0 1 135.744 0z"/></svg><div class="e">编辑</div><svg style="left:1522px;top:13px;color:#f56c6c" viewBox="0 0 1024 1024" fill="currentColor"><path d="M160 256H96a32 32 0 0 1 0-64h256V95.936a32 32 0 0 1 32-32h256a32 32 0 0 1 32 32V192h256a32 32 0 1 1 0 64h-64v672a32 32 0 0 1-32 32H192a32 32 0 0 1-32-32V256zm448-64v-64H416v64h192zM224 896h576V256H224v640zm192-128a32 32 0 0 1-32-32V416a32 32 0 0 1 64 0v320a32 32 0 0 1-32 32zm192 0a32 32 0 0 1-32-32V416a32 32 0 0 1 64 0v320a32 32 0 0 1-32 32z"/></svg><div class="d">删除</div></div>
<i class="cb" style="left:262px;top:477px"></i><div class="tag" style="top:472px">正常</div>
<div class="rb" style="top:546px"></div>
<div class="row" style="top:505px"><div class="c1">7</div><div class="c2">通知类型</div><div class="c3">sys_notice_type</div><div class="c5">通知类型列表</div><div class="c6">2022-06-27 15:09:20</div><svg style="left:1468px;top:13px;color:#409eff" viewBox="0 0 1024 1024" fill="currentColor"><path d="M832 512a32 32 0 1 1 64 0v352a32 32 0 0 1-32 32H160a32 32 0 0 1-32-32V160a32 32 0 0 1 32-32h352a32 32 0 0 1 0 64H192v640h640V512z"/><path d="m469.952 554.240 52.800-7.552L847.104 222.400a32 32 0 1 0-45.248-45.248L477.440 501.440l-7.552 52.800zm422.400-422.400a96 96 0 0 1 0 135.808l-331.840 331.840a32 32 0 0 1-18.112 9.088L436.800 623.680a32 32 0 0 1-36.224-36.224l15.104-105.600a32 32 0 0 1 9.024-18.112l331.904-331.840a96 96 0 0 1 135.744 0z"/></svg><div class="e">编辑</div><svg style="left:1522px;top:13px;color:#f56c6c" viewBox="0 0 1024 1024" fill="currentColor"><path d="M160 256H96a32 32 0 0 1 0-64h256V95.936a32 32 0 0 1 32-32h256a32 32 0 0 1 32 32V192h256a32 32 0 1 1 0 64h-64v672a32 32 0 0 1-32 32H192a32 32 0 0 1-32-32V256zm448-64v-64H416v64h192zM224 896h576V256H224v640zm192-128a32 32 0 0 1-32-32V416a32 32 0 0 1 64 0v320a32 32 0 0 1-32 32zm192 0a32 32 0 0 1-32-32V416a32 32 0 0 1 64 0v320a32 32 0 0 1-32 32z"/></svg><div class="d">删除</div></div>
<i class="cb" style="left:262px;top:518px"></i><div class="tag" style="top:514px">正常</div>
<div class="rb" style="top:587px"></div>
<div class="row" style="top:546px"><div class="c1">8</div><div class="c2">通知状态</div><div class="c3">sys_notice_status</div><div class="c5">通知状态列表</div><div class="c6">2022-06-27 15:09:20</div><svg style="left:1468px;top:13px;color:#409eff" viewBox="0 0 1024 1024" fill="currentColor"><path d="M832 512a32 32 0 1 1 64 0v352a32 32 0 0 1-32 32H160a32 32 0 0 1-32-32V160a32 32 0 0 1 32-32h352a32 32 0 0 1 0 64H192v640h640V512z"/><path d="m469.952 554.240 52.800-7.552L847.104 222.400a32 32 0 1 0-45.248-45.248L477.440 501.440l-7.552 52.800zm422.400-422.400a96 96 0 0 1 0 135.808l-331.840 331.840a32 32 0 0 1-18.112 9.088L436.800 623.680a32 32 0 0 1-36.224-36.224l15.104-105.600a32 32 0 0 1 9.024-18.112l331.904-331.840a96 96 0 0 1 135.744 0z"/></svg><div class="e">编辑</div><svg style="left:1522px;top:13px;color:#f56c6c" viewBox="0 0 1024 1024" fill="currentColor"><path d="M160 256H96a32 32 0 0 1 0-64h256V95.936a32 32 0 0 1 32-32h256a32 32 0 0 1 32 32V192h256a32 32 0 1 1 0 64h-64v672a32 32 0 0 1-32 32H192a32 32 0 0 1-32-32V256zm448-64v-64H416v64h192zM224 896h576V256H224v640zm192-128a32 32 0 0 1-32-32V416a32 32 0 0 1 64 0v320a32 32 0 0 1-32 32zm192 0a32 32 0 0 1-32-32V416a32 32 0 0 1 64 0v320a32 32 0 0 1-32 32z"/></svg><div class="d">删除</div></div>
<i class="cb" style="left:262px;top:560px"></i><div class="tag" style="top:555px">正常</div>
<div class="rb" style="top:628px"></div>
<div class="row" style="top:588px"><div class="c1">9</div><div class="c2">操作类型</div><div class="c3">sys_oper_type</div><div class="c5">操作类型列表</div><div class="c6">2022-06-27 15:09:20</div><svg style="left:1468px;top:13px;color:#409eff" viewBox="0 0 1024 1024" fill="currentColor"><path d="M832 512a32 32 0 1 1 64 0v352a32 32 0 0 1-32 32H160a32 32 0 0 1-32-32V160a32 32 0 0 1 32-32h352a32 32 0 0 1 0 64H192v640h640V512z"/><path d="m469.952 554.240 52.800-7.552L847.104 222.400a32 32 0 1 0-45.248-45.248L477.440 501.440l-7.552 52.800zm422.400-422.400a96 96 0 0 1 0 135.808l-331.840 331.840a32 32 0 0 1-18.112 9.088L436.800 623.680a32 32 0 0 1-36.224-36.224l15.104-105.600a32 32 0 0 1 9.024-18.112l331.904-331.840a96 96 0 0 1 135.744 0z"/></svg><div class="e">编辑</div><svg style="left:1522px;top:13px;color:#f56c6c" viewBox="0 0 1024 1024" fill="currentColor"><path d="M160 256H96a32 32 0 0 1 0-64h256V95.936a32 32 0 0 1 32-32h256a32 32 0 0 1 32 32V192h256a32 32 0 1 1 0 64h-64v672a32 32 0 0 1-32 32H192a32 32 0 0 1-32-32V256zm448-64v-64H416v64h192zM224 896h576V256H224v640zm192-128a32 32 0 0 1-32-32V416a32 32 0 0 1 64 0v320a32 32 0 0 1-32 32zm192 0a32 32 0 0 1-32-32V416a32 32 0 0 1 64 0v320a32 32 0 0 1-32 32z"/></svg><div class="d">删除</div></div>
<i class="cb" style="left:262px;top:601px"></i><div class="tag" style="top:596px">正常</div>
<div class="rb" style="top:670px"></div>
<div class="row" style="top:629px"><div class="c1">10</div><div class="c2">系统状态</div><div class="c3">sys_common_status</div><div class="c5">登录状态列表</div><div class="c6">2022-06-27 15:09:20</div><svg style="left:1468px;top:13px;color:#409eff" viewBox="0 0 1024 1024" fill="currentColor"><path d="M832 512a32 32 0 1 1 64 0v352a32 32 0 0 1-32 32H160a32 32 0 0 1-32-32V160a32 32 0 0 1 32-32h352a32 32 0 0 1 0 64H192v640h640V512z"/><path d="m469.952 554.240 52.800-7.552L847.104 222.400a32 32 0 1 0-45.248-45.248L477.440 501.440l-7.552 52.800zm422.400-422.400a96 96 0 0 1 0 135.808l-331.840 331.840a32 32 0 0 1-18.112 9.088L436.800 623.680a32 32 0 0 1-36.224-36.224l15.104-105.600a32 32 0 0 1 9.024-18.112l331.904-331.840a96 96 0 0 1 135.744 0z"/></svg><div class="e">编辑</div><svg style="left:1522px;top:13px;color:#f56c6c" viewBox="0 0 1024 1024" fill="currentColor"><path d="M160 256H96a32 32 0 0 1 0-64h256V95.936a32 32 0 0 1 32-32h256a32 32 0 0 1 32 32V192h256a32 32 0 1 1 0 64h-64v672a32 32 0 0 1-32 32H192a32 32 0 0 1-32-32V256zm448-64v-64H416v64h192zM224 896h576V256H224v640zm192-128a32 32 0 0 1-32-32V416a32 32 0 0 1 64 0v320a32 32 0 0 1-32 32zm192 0a32 32 0 0 1-32-32V416a32 32 0 0 1 64 0v320a32 32 0 0 1-32 32z"/></svg><div class="d">删除</div></div>
<i class="cb" style="left:262px;top:643px"></i><div class="tag" style="top:638px">正常</div>
<div class="pt" style="left:1113px">共 105 条</div>
<div class="inp" style="left:1189px;top:711px;width:128px;color:#606266;padding-left:0"><span style="position:absolute;left:29px">10条/页</span><svg style="position:absolute;left:102px;top:8px;width:14px;height:14px;color:#a8abb2" viewBox="0 0 1024 1024" fill="currentColor"><path d="M831.872 340.864 512 652.672 192.128 340.864a30.592 30.592 0 0 0-42.752 0 29.120 29.120 0 0 0 0 41.600L489.664 714.240a32 32 0 0 0 44.672 0l340.288-331.712a29.120 29.120 0 0 0 0-41.728 30.592 30.592 0 0 0-42.752 0z"/></svg></div>
<div class="pg" style="left:1333px;background:#f5f7fa;color:#a8abb2"><svg style="width:12px;height:12px;margin:10px auto 0" viewBox="0 0 1024 1024" fill="currentColor"><path d="M609.408 149.376 277.760 489.600a32 32 0 0 0 0 44.672l331.648 340.352a29.120 29.120 0 0 0 41.728 0 30.592 30.592 0 0 0 0-42.752L339.264 511.936l311.872-319.872a30.592 30.592 0 0 0 0-42.688 29.120 29.120 0 0 0-41.728 0z"/></svg></div>
<div class="pg on" style="left:1373px">1</div>
<div class="pg" style="left:1413px">2</div>
<div class="pg" style="left:1453px">3</div>
<div class="pg" style="left:1493px">4</div>
<div class="pg" style="left:1533px">5</div>
<div class="pg" style="left:1573px">6</div>
<div class="pg" style="left:1613px"><svg style="width:14px;height:14px;margin:9px auto 0;color:#303133" viewBox="0 0 1024 1024" fill="currentColor"><path d="M176 416a112 112 0 1 1 0 224 112 112 0 0 1 0-224zm336 0a112 112 0 1 1 0 224 112 112 0 0 1 0-224zm336 0a112 112 0 1 1 0 224 112 112 0 0 1 0-224z"/></svg></div>
<div class="pg" style="left:1653px">11</div>
<div class="pg" style="left:1693px;color:#303133"><svg style="width:12px;height:12px;margin:10px auto 0" viewBox="0 0 1024 1024" fill="currentColor"><path d="M340.864 149.312a30.592 30.592 0 0 0 0 42.752L652.736 512 340.864 831.872a30.592 30.592 0 0 0 0 42.752 29.120 29.120 0 0 0 41.728 0L714.240 534.336a32 32 0 0 0 0-44.672L382.592 149.376a29.120 29.120 0 0 0-41.728 0z"/></svg></div>
<div class="pt" style="left:1745px">前往</div>
<div class="inp" style="left:1781px;top:711px;width:56px;color:#606266;padding-left:0;text-align:center">1</div>
<div class="pt" style="left:1845px">页</div>
</body>
</html>
